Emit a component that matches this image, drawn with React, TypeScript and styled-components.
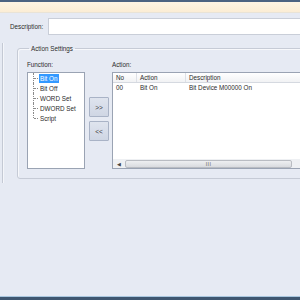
import React from "react";
import styled, { createGlobalStyle } from "styled-components";

const GlobalStyle = createGlobalStyle`
  html, body {
    margin: 0;
    padding: 0;
    background: #e6eaf3;
  }
  * {
    box-sizing: border-box;
  }
`;

const Window = styled.div`
  width: 300px;
  height: 300px;
  overflow: hidden;
  display: flex;
  flex-direction: column;
  background: #e6eaf3;
  font-family: "Liberation Sans", Arial, sans-serif;
  font-size: 6.3px;
  color: #2a2a2a;
`;

const TopBar = styled.div`
  height: 2px;
  flex-shrink: 0;
  background: #4b6381;
`;

const InfoBand = styled.div`
  height: 11px;
  flex-shrink: 0;
  background: linear-gradient(#fdf4e3, #fbedd4);
  border-bottom: 1px solid #e9e3d6;
`;

const DescRow = styled.div`
  display: flex;
  align-items: center;
  gap: 5px;
  padding: 5px 0 0 10px;
  flex-shrink: 0;
`;

const Label = styled.span`
  white-space: nowrap;
  line-height: 9px;
`;

const TextInput = styled.div`
  flex: 1;
  height: 17px;
  margin-right: -4px;
  background: #ffffff;
  border: 1px solid #c9ced8;
`;

const Panel = styled.div`
  margin: 8px 0 0 2px;
  padding: 1px 0 0 14px;
  height: 140px;
  border-left: 1px solid #c4c9d4;
  box-shadow: inset 1px 0 0 #f4f6fa;
  flex-shrink: 0;
`;

const Group = styled.fieldset`
  margin: 0 -20px 0 0;
  padding: 7px 0 9px 9px;
  border: 1px solid #c6cbd6;
  border-radius: 3px;
  box-shadow: inset 1px 1px 0 #f7f8fb;
  height: 135px;
`;

const Legend = styled.legend`
  padding: 0 2px;
  margin-left: 2px;
  line-height: 9px;
`;

const Columns = styled.div`
  display: flex;
  align-items: flex-start;
  height: 100%;
`;

const Column = styled.div<{ $width?: number }>`
  display: flex;
  flex-direction: column;
  gap: 3px;
  height: 100%;
  ${({ $width }) => ($width ? `width: ${$width}px;` : "flex: 1;")}
`;

const TreeBox = styled.div`
  flex: 1;
  background: #ffffff;
  border: 1px solid #9aa3b3;
  padding: 0 0 0 5px;
`;

const TreeItem = styled.div<{ $last?: boolean }>`
  position: relative;
  height: 10px;
  display: flex;
  align-items: center;
  padding-left: 6px;

  &::before {
    content: "";
    position: absolute;
    left: 0;
    top: 0;
    height: ${({ $last }) => ($last ? "5px" : "10px")};
    border-left: 1px dotted #8a8a8a;
  }
  &::after {
    content: "";
    position: absolute;
    left: 1px;
    top: 5px;
    width: 4px;
    border-top: 1px dotted #8a8a8a;
  }
`;

const TreeText = styled.span<{ $selected?: boolean }>`
  padding: 0 1px;
  line-height: 9px;
  white-space: nowrap;
  background: ${({ $selected }) => ($selected ? "#3399ff" : "transparent")};
  color: ${({ $selected }) => ($selected ? "#ffffff" : "#2a2a2a")};
`;

const ButtonStack = styled.div`
  display: flex;
  flex-direction: column;
  gap: 4px;
  padding: 37px 3px 0 4px;
`;

const MoveButton = styled.button`
  width: 20px;
  height: 20px;
  padding: 0;
  border: 1px solid #a9b3c6;
  border-radius: 1px;
  background: linear-gradient(#dfe4ee, #cfd6e4);
  font-family: "Liberation Sans", Arial, sans-serif;
  font-size: 6.5px;
  color: #3a3a3a;
`;

const ListBox = styled.div`
  flex: 1;
  display: flex;
  flex-direction: column;
  background: #ffffff;
  border: 1px solid #9aa3b3;
  border-right: none;
`;

const HeaderRow = styled.div`
  display: flex;
  height: 10px;
  background: linear-gradient(#ffffff, #f1f2f4);
  border-bottom: 1px solid #d5d9e0;
`;

const HeaderCell = styled.div<{ $width?: number }>`
  ${({ $width }) => ($width ? `width: ${$width}px;` : "flex: 1;")}
  padding-left: 3px;
  line-height: 9px;
  border-right: 1px solid #dde0e6;
  white-space: nowrap;
`;

const DataRow = styled.div`
  display: flex;
  height: 10px;
`;

const DataCell = styled.div<{ $width?: number }>`
  ${({ $width }) => ($width ? `width: ${$width}px;` : "flex: 1;")}
  padding-left: 3px;
  line-height: 10px;
  white-space: nowrap;
`;

const ListBody = styled.div`
  flex: 1;
`;

const HScroll = styled.div`
  height: 9px;
  display: flex;
  align-items: center;
  gap: 2px;
  background: #eef0f3;
  padding: 0 0 0 1px;
`;

const ScrollArrow = styled.div`
  width: 9px;
  height: 9px;
  display: flex;
  align-items: center;
  justify-content: center;
  font-size: 5px;
  color: #444;
`;

const ScrollThumb = styled.div`
  width: 167px;
  height: 8px;
  border: 1px solid #b9bcc2;
  border-radius: 2px;
  background: linear-gradient(#eeeff1, #d9dbdf);
  display: flex;
  align-items: center;
  justify-content: center;
  font-size: 5px;
  letter-spacing: 0.5px;
  color: #555;
`;

const Filler = styled.div`
  flex: 1;
`;

const BottomLine = styled.div`
  height: 1px;
  flex-shrink: 0;
  background: #a9c6de;
`;

const BottomBar = styled.div`
  height: 3px;
  flex-shrink: 0;
  background: #3e5670;
`;

const functions = ["Bit On", "Bit Off", "WORD Set", "DWORD Set", "Script"];

export default function App() {
  return (
    <>
      <GlobalStyle />
      <Window>
        <TopBar />
        <InfoBand />
        <DescRow>
          <Label>Description:</Label>
          <TextInput />
        </DescRow>
        <Panel>
          <Group>
            <Legend>Action Settings</Legend>
            <Columns>
              <Column $width={58}>
                <Label>Function:</Label>
                <TreeBox>
                  {functions.map((f, i) => (
                    <TreeItem key={f} $last={i === functions.length - 1}>
                      <TreeText $selected={i === 0}>{f}</TreeText>
                    </TreeItem>
                  ))}
                </TreeBox>
              </Column>
              <ButtonStack>
                <MoveButton>&gt;&gt;</MoveButton>
                <MoveButton>&lt;&lt;</MoveButton>
              </ButtonStack>
              <Column>
                <Label>Action:</Label>
                <ListBox>
                  <HeaderRow>
                    <HeaderCell $width={24}>No</HeaderCell>
                    <HeaderCell $width={49}>Action</HeaderCell>
                    <HeaderCell>Description</HeaderCell>
                  </HeaderRow>
                  <ListBody>
                    <DataRow>
                      <DataCell $width={24}>00</DataCell>
                      <DataCell $width={49}>Bit On</DataCell>
                      <DataCell>Bit Device M00000 On</DataCell>
                    </DataRow>
                  </ListBody>
                  <HScroll>
                    <ScrollArrow>◀</ScrollArrow>
                    <ScrollThumb>III</ScrollThumb>
                  </HScroll>
                </ListBox>
              </Column>
            </Columns>
          </Group>
        </Panel>
        <Filler />
        <BottomLine />
        <BottomBar />
      </Window>
    </>
  );
}
